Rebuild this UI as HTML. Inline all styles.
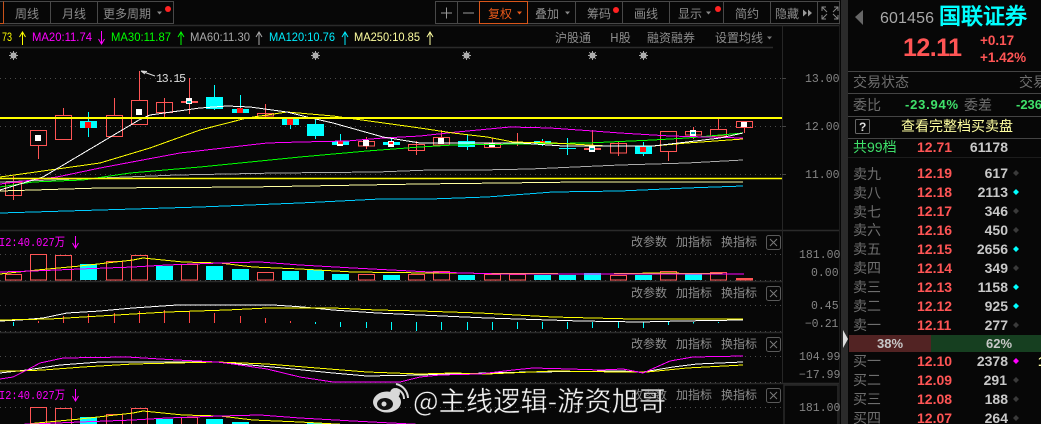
<!DOCTYPE html>
<html><head><meta charset="utf-8">
<style>
html,body{margin:0;padding:0;background:#070707;width:1041px;height:424px;overflow:hidden}
svg{display:block}
text{font-family:"Liberation Sans","WenQuanYi Zen Hei","Noto Sans CJK SC",sans-serif;white-space:pre}
.m{font-family:"Liberation Mono","WenQuanYi Zen Hei",monospace}
.t{font-size:12px;fill:#8c8c8c;font-family:"WenQuanYi Zen Hei","Noto Sans CJK SC",sans-serif}
.a{font-family:"Liberation Mono",monospace;font-size:11.5px;fill:#858585}
.l{font-size:14px;fill:#6e6e6e;font-family:"WenQuanYi Zen Hei","Noto Sans CJK SC",sans-serif}
.p{font-size:14px;font-weight:bold;fill:#f55}
.v{font-size:14px;font-weight:bold;fill:#c8c8c8;text-anchor:end}
.r{fill:none;stroke:#f55;stroke-width:1}
.c{fill:#0ff}
.w{stroke:#f55;stroke-width:1}
.wc{stroke:#0ff;stroke-width:1}
.ln{fill:none;stroke-width:1;shape-rendering:crispEdges}
.b{fill:none;stroke:#484848;stroke-width:1}
.d{stroke:#4a4a4a;stroke-width:1;stroke-dasharray:1 4}
.s{stroke:#2a2a2a;stroke-width:1.5}
</style></head>
<body>
<svg width="1041" height="424" viewBox="0 0 1041 424" xmlns="http://www.w3.org/2000/svg">
<defs>
<g id="vol">
<path class="d" d="M0 254.5H782M0 280.5H782"/>
<g class="r">
<rect x="5.5" y="274.5" width="16" height="5.5"/><rect x="30.5" y="254.5" width="16" height="25.5"/><rect x="55.5" y="255.5" width="16" height="24.5"/><rect x="106.5" y="261.5" width="16" height="18.5"/><rect x="131.5" y="255.5" width="16" height="24.5"/><rect x="181.5" y="264.5" width="16" height="15.5"/><rect x="257.5" y="272.5" width="16" height="7.5"/><rect x="358.5" y="274.5" width="16" height="5.5"/><rect x="408.5" y="274.5" width="16" height="5.5"/><rect x="433.5" y="271.5" width="16" height="8.5"/><rect x="484.5" y="274.5" width="16" height="5.5"/><rect x="509.5" y="274.5" width="16" height="5.5"/><rect x="610.5" y="275.5" width="16" height="4.5"/><rect x="660.5" y="271.5" width="16" height="8.5"/><rect x="710.5" y="272.5" width="16" height="7.5"/>
</g>
<g class="c">
<rect x="80" y="264" width="17" height="16"/><rect x="156" y="266" width="17" height="14"/><rect x="206" y="266" width="17" height="14"/><rect x="232" y="269" width="17" height="11"/><rect x="282" y="271" width="17" height="9"/><rect x="307" y="270" width="17" height="10"/><rect x="332" y="274" width="17" height="6"/><rect x="383" y="275" width="17" height="5"/><rect x="458" y="275" width="17" height="5"/><rect x="534" y="275" width="17" height="5"/><rect x="559" y="275" width="17" height="5"/><rect x="584" y="273" width="17" height="7"/><rect x="635" y="275" width="17" height="5"/><rect x="685" y="274" width="17" height="6"/>
</g>
<rect x="736" y="278" width="17" height="2.5" fill="#f55"/>
<polyline class="ln" stroke="#ff0" points="0,274 37,270 80,266 133,260 143,258 183,262 220,263 253,267 300,269 353,272 430,273 600,274 657,273 744,274"/>
<polyline class="ln" stroke="#f0f" points="0,272 33,271 80,269 133,267 167,265 220,263 260,262 300,265 353,268 430,272 500,274 744,274"/>
</g>
<g id="x"><rect x="0.5" y="0.5" width="14" height="14" rx="2" fill="none" stroke="#5a5a5a"/><path d="M4 4L11 11M11 4L4 11" stroke="#7a7a7a"/></g>
<g id="star"><circle r="3" fill="#bbb"/><path d="M-4.5 0H4.5M0-4.5V4.5M-3.3-3.3L3.3 3.3M3.3-3.3L-3.3 3.3" stroke="#aaa"/></g>
<clipPath id="cl"><rect x="0" y="384" width="782" height="40"/></clipPath>
</defs>
<rect width="1041" height="424" fill="#070707"/>

<!-- frame -->
<path class="s" d="M0 25.5H840M0 47.5H773M0 230.5H840M0 281.5H782M0 332.5H782M0 383.5H840"/>
<path d="M782.5 26V383" stroke="#262626"/>
<path d="M784 424V385H838V424" fill="none" stroke="#2a2a2a" stroke-width="1.5"/>
<rect x="841" y="0" width="7" height="424" fill="#2b2b2b"/>
<rect x="839" y="0" width="1" height="424" fill="#1c1c1c"/>
<path d="M843 330L848 339L843 348Z" fill="#ddd"/>

<!-- left tabs -->
<path class="b" d="M-1 1.5H173.5V23.5H-1M50.5 1.5V23.5M97.5 1.5V23.5"/>
<path d="M3.5 1.5V23.5H0" fill="none" stroke="#c8521a"/>
<text class="t" x="15" y="18">周线</text>
<text class="t" x="62" y="18">月线</text>
<text class="t" x="103" y="18">更多周期</text>
<path d="M157 11.5h5l-2.5 3z" fill="#888"/>
<circle cx="168" cy="9" r="3" fill="#f22"/>

<!-- right toolbar -->
<path class="b" d="M435.5 1.5H839.5V23.5H435.5ZM457.5 1.5V23.5M479.5 1.5V23.5M575.5 1.5V23.5M622.5 1.5V23.5M669.5 1.5V23.5M723.5 1.5V23.5M770.5 1.5V23.5M817.5 1.5V23.5"/>
<path d="M441 13H452M446.5 7.5V18.5M463 13H474" stroke="#999"/>
<rect x="479.5" y="1.5" width="48" height="22" fill="none" stroke="#d9561a"/>
<text x="488" y="18" style="font-size:12px;fill:#e8591a;font-family:'WenQuanYi Zen Hei',sans-serif">复权</text>
<path d="M517 11.5h5l-2.5 3z" fill="#e8591a"/>
<text class="t" x="535" y="18">叠加</text>
<path d="M565 11.5h5l-2.5 3z" fill="#888"/>
<text class="t" x="587" y="18">筹码</text>
<circle cx="616" cy="10" r="3" fill="#f22"/>
<text class="t" x="634" y="18">画线</text>
<text class="t" x="678" y="18">显示</text>
<path d="M706 11.5h5l-2.5 3z" fill="#888"/>
<circle cx="718" cy="9" r="3" fill="#f22"/>
<text class="t" x="735" y="18">简约</text>
<text class="t" x="775" y="18">隐藏</text>
<path d="M803 9.5l4 3.5-4 3.5zM808 9.5l4 3.5-4 3.5z" fill="#999"/>
<path d="M822 11V7H826M834 7H838V11M838 15V19H834M826 19H822V15M822 7L827 12M838 7L833 12M838 19L833 14M822 19L827 14" fill="none" stroke="#888"/>

<!-- MA row -->
<g style="font-size:12px" class="m">
<text x="2" y="41" fill="#ff0" textLength="10" lengthAdjust="spacingAndGlyphs">73</text>
<text x="32" y="41" fill="#f0f" textLength="60" lengthAdjust="spacingAndGlyphs">MA20:11.74</text>
<text x="111" y="41" fill="#0f0" textLength="60" lengthAdjust="spacingAndGlyphs">MA30:11.87</text>
<text x="190" y="41" fill="#aaa" textLength="60" lengthAdjust="spacingAndGlyphs">MA60:11.30</text>
<text x="269" y="41" fill="#0ef" textLength="66" lengthAdjust="spacingAndGlyphs">MA120:10.76</text>
<text x="354" y="41" fill="#ffffa0" textLength="66" lengthAdjust="spacingAndGlyphs">MA250:10.85</text>
</g>
<g fill="none">
<path d="M22.5 45V32M19.5 37L22.5 32L25.5 37" stroke="#ff0"/>
<path d="M101.5 31V44M98.5 39L101.5 44L104.5 39" stroke="#f0f"/>
<path d="M181 45V32M178 37L181 32L184 37" stroke="#0f0"/>
<path d="M259 45V32M256 37L259 32L262 37" stroke="#aaa"/>
<path d="M345 45V32M342 37L345 32L348 37" stroke="#0ef"/>
<path d="M430 45V32M427 37L430 32L433 37" stroke="#ffffa0"/>
</g>
<text class="t" x="555" y="42">沪股通</text>
<text class="t" x="610" y="42">H股</text>
<text class="t" x="647" y="42">融资融券</text>
<text class="t" x="715" y="42">设置均线</text>
<path d="M767 36.5h5l-2.5 3z" fill="#777"/>

<!-- stars -->
<use href="#star" x="13.5" y="55.5"/><use href="#star" x="315.5" y="55.5"/><use href="#star" x="466.5" y="55.5"/><use href="#star" x="592.5" y="55.5"/><use href="#star" x="643.5" y="55.5"/>

<!-- main chart grid -->
<path class="d" d="M0 78.5H782M0 126.5H782M0 174.5H782"/>
<path d="M782 78.5h4M782 126.5h4M782 174.5h4" stroke="#444"/>
<text class="a" x="805" y="82">13.00</text>
<text class="a" x="805" y="130">12.00</text>
<text class="a" x="805" y="178">11.00</text>

<!-- candle wicks -->
<g class="w">
<path d="M13.5 176V200M38.5 146V159M63.5 108V115M114.5 98V115M139.5 71V100M164.5 98V117M189.5 78V114M265.5 104V118M366.5 137V149M416.5 141V155M441.5 130V137M492.5 138V147M517.5 133V146M592.5 130V150M618.5 141V156M668.5 152V161M693.5 127V139M718.5 118V129M744.5 127V133"/>
</g>
<g class="wc">
<path d="M88.5 112V137M214.5 85V110M240.5 95V113M290.5 125V129M315.5 118V139M340.5 134V145M391.5 139V147M467.5 135V150M542.5 139V146M567.5 138V155M643.5 142V156"/>
</g>
<!-- hollow -->
<g class="r">
<rect x="5.5" y="182.5" width="16" height="13"/>
<rect x="30.5" y="130.5" width="16" height="15"/>
<rect x="55.5" y="115.5" width="16" height="24"/>
<rect x="106.5" y="115.5" width="16" height="21"/>
<rect x="131.5" y="100.5" width="16" height="24"/>
<rect x="156.5" y="102.5" width="16" height="10"/>
<rect x="257.5" y="113.5" width="16" height="2.5"/>
<rect x="358.5" y="141.5" width="16" height="4.5"/>
<rect x="408.5" y="144.5" width="16" height="6"/>
<rect x="433.5" y="137.5" width="16" height="7.5"/>
<rect x="484.5" y="143.5" width="16" height="4"/>
<rect x="610.5" y="143.5" width="16" height="9.5"/>
<rect x="660.5" y="131.5" width="16" height="20"/>
<rect x="685.5" y="131.5" width="16" height="3.5"/>
<rect x="710.5" y="129.5" width="16" height="6.5"/>
<rect x="736.5" y="121.5" width="16" height="6"/>
</g>
<!-- filled -->
<g class="c">
<rect x="80" y="121" width="17" height="7"/><rect x="206" y="97" width="17" height="12"/><rect x="232" y="109" width="17" height="4"/><rect x="282" y="119" width="17" height="6"/><rect x="307" y="124" width="17" height="12"/><rect x="332" y="141" width="17" height="4"/><rect x="383" y="142" width="17" height="3"/><rect x="458" y="141" width="17" height="6"/><rect x="534" y="141" width="17" height="3"/><rect x="559" y="148" width="17" height="1"/><rect x="635" y="146" width="17" height="8"/>
</g>
<rect x="181" y="101" width="17" height="2" fill="#f55"/>
<rect x="584" y="148" width="17" height="2" fill="#f55"/>
<!-- centers -->
<g fill="#fff">
<rect x="35" y="135" width="6" height="6"/><rect x="136" y="109" width="6" height="6"/><rect x="186" y="98" width="6" height="6"/><rect x="438" y="138" width="6" height="6"/><rect x="489" y="143" width="6" height="4"/><rect x="589" y="146" width="6" height="6"/><rect x="690" y="130" width="6" height="6"/><rect x="741" y="122" width="6" height="5"/><rect x="337" y="141" width="6" height="5"/><rect x="388" y="141" width="6" height="6"/><rect x="363" y="140" width="6" height="6"/>
</g>
<g fill="#0aa"><rect x="187" y="101" width="4" height="2"/><rect x="590" y="148" width="4" height="2"/><rect x="691" y="132" width="4" height="2"/></g>
<g fill="#f11"><rect x="85" y="122" width="6" height="6"/><rect x="237" y="108" width="6" height="5"/><rect x="287" y="119" width="6" height="6"/><rect x="338" y="141" width="5" height="3"/><rect x="389" y="142" width="4" height="2"/><rect x="540" y="141" width="5" height="3"/><rect x="640" y="147" width="6" height="5"/></g>

<!-- MA lines -->
<polyline class="ln" stroke="#ffffa0" points="0,191 100,188 250,187 420,184 503,183 580,182 743,182"/>
<polyline class="ln" stroke="#0cf" points="0,213 100,210 200,207 300,203 380,199 430,199 487,197 553,192 620,191 687,188 743,186"/>
<polyline class="ln" stroke="#aaa" points="0,182 50,180 177,175 277,173 377,172 430,170 480,170 530,169 620,165 687,163 743,160"/>
<polyline class="ln" stroke="#0f0" points="0,187 33,182 83,180 130,173 200,167 300,157 367,151 420,147 453,145 587,143 653,140 687,138 743,133"/>
<polyline class="ln" stroke="#f0f" points="0,184 57,177 100,168 180,153 267,143 300,142 347,141 383,138 420,136 457,132 510,127 550,128 593,131 620,133 670,136 743,138"/>
<polyline class="ln" stroke="#ff0" points="0,177 50,170 100,163 150,148 200,130 247,118 287,112 333,116 420,128 453,133 487,137 513,142 553,143 607,146 653,146 687,143 743,139"/>
<polyline class="ln" stroke="#fff" points="0,190 43,177 139,120 150,115 200,108 227,106 250,107 287,112 307,117 333,123 383,137 420,143 520,143 563,146 653,146 687,142 720,138 743,133"/>
<path d="M0 118H782" stroke="#ff0" stroke-width="2"/>
<path d="M0 178.5H782" stroke="#ff0" stroke-width="1.5"/>
<path d="M141 71L155 76M141 71L147 71.5M141 71L145 74" stroke="#ddd" fill="none"/>
<text x="156" y="82" class="m" style="font-size:11.5px" fill="#ddd" textLength="30">13.15</text>

<!-- panel labels -->
<text x="-1" y="246" class="m" style="font-size:12px" fill="#f0f" textLength="66" lengthAdjust="spacingAndGlyphs">I2:40.027万</text>
<path d="M75.5 236V248M72.5 243L75.5 248L78.5 243" stroke="#f0f" fill="none"/>
<text x="-1" y="399" class="m" style="font-size:12px" fill="#f0f" textLength="66" lengthAdjust="spacingAndGlyphs">I2:40.027万</text>
<path d="M75.5 389V401M72.5 396L75.5 401L78.5 396" stroke="#f0f" fill="none"/>
<g class="t">
<text x="631" y="246">改参数</text><text x="676" y="246">加指标</text><text x="721" y="246">换指标</text>
<text x="631" y="297">改参数</text><text x="676" y="297">加指标</text><text x="721" y="297">换指标</text>
<text x="631" y="348">改参数</text><text x="676" y="348">加指标</text><text x="721" y="348">换指标</text>
<text x="631" y="399">改参数</text><text x="676" y="399">加指标</text><text x="721" y="399">换指标</text>
</g>
<use href="#x" x="766" y="235"/><use href="#x" x="766" y="286"/><use href="#x" x="766" y="337"/><use href="#x" x="766" y="388"/>

<!-- volume panel -->
<use href="#vol"/>
<text class="a" x="799" y="258">181.00</text><text class="a" x="811" y="276">0.00</text>

<!-- MACD -->
<path class="d" d="M0 305.5H782M0 331.5H782"/>
<path d="M38.5 321V323M63.5 316V323M88.5 314V323M114.500 313V323M139.500 311V323M164.500 310V323M189.500 311V323M214.500 313V323M240.500 316V323M265.500 318V323M290.500 321V323" stroke="#f44"/>
<path d="M13.5 322V326M315.500 322V324M340.500 322V327M366.500 322V328M391.500 322V330M416.500 322V331M441.500 322V330M467.500 322V330M492.500 322V330M517.500 322V329M542.500 322V329M567.500 322V329M592.500 322V328M618.500 322V328M643.500 322V328M668.500 322V325M693.500 322V323.500M718.500 322V323" stroke="#0ff"/>
<polyline class="ln" stroke="#fff" points="0,321 20,320 43,318 67,313 100,311 133,308 177,305 273,305 303,307 333,310 377,313 420,315 487,318 580,321 640,322 680,321 743,320"/>
<polyline class="ln" stroke="#ff0" points="0,320 50,319 100,316 167,312 227,310 267,308 333,308 377,310 420,311 480,313 553,317 633,319 743,319"/>
<text class="a" x="811" y="309">0.45</text><text class="a" x="805" y="327" style="letter-spacing:-.3px">−0.21</text>

<!-- KDJ -->
<path class="d" d="M0 356.5H782M0 382.5H782"/>
<polyline class="ln" stroke="#fff" points="0,373 27,370 60,365 100,362 150,362 217,362 250,365 283,368 333,373 367,376 420,375 487,373 530,372 620,371 643,372 673,367 697,364 743,362"/>
<polyline class="ln" stroke="#ff0" points="0,371 20,371 43,370 83,367 133,364 217,362 267,364 317,368 367,372 420,374 453,373 487,374 553,371 620,372 647,372 687,368 743,365"/>
<polyline class="ln" stroke="#f0f" points="0,379 13,377 27,370 40,363 63,358 127,357 177,360 217,362 233,364 267,369 300,377 333,382 400,382 420,377 440,375 480,374 513,370 533,368 570,369 600,370 623,369 643,373 670,361 693,357 743,356"/>
<text class="a" x="799" y="360">104.99</text><text class="a" x="799" y="378">−17.99</text>

<!-- 4th panel -->
<g clip-path="url(#cl)"><use href="#vol" y="153"/></g>
<text class="a" x="799" y="411">181.00</text>

<!-- Right panel -->
<path d="M855 17L863 10V25Z" fill="#666"/>
<text x="880" y="23" style="font-size:16px" fill="#a8a8a8" textLength="54">601456</text>
<text x="939" y="24" style="font-size:22px;font-weight:bold;font-family:'WenQuanYi Zen Hei',sans-serif" fill="#0ff">国联证券</text>
<text x="903" y="56" style="font-size:25px;font-weight:bold" fill="#f55" textLength="59">12.11</text>
<text x="980" y="45" style="font-size:13.5px;font-weight:bold" fill="#f55">+0.17</text>
<text x="980" y="62" style="font-size:13.5px;font-weight:bold" fill="#f55">+1.42%</text>
<path d="M848 71.5H1041M848 93.5H1041M848 116.5H1041M848 138.5H1041" stroke="#444"/>
<path d="M848 157.5H1041" stroke="#1c1c1c"/>
<text class="l" x="853" y="87">交易状态</text><text class="l" x="1019" y="87">交易</text>
<text class="l" x="853" y="110">委比</text>
<text x="905" y="109" style="font-size:13px;font-weight:bold" fill="#3fe06a" textLength="53">-23.94%</text>
<text class="l" x="964" y="110">委差</text>
<text x="1016" y="109" style="font-size:13px;font-weight:bold" fill="#3fe06a">-236</text>
<rect x="855.5" y="119.5" width="14" height="14" rx="1" fill="none" stroke="#666"/>
<text x="859" y="131" style="font-size:12px;font-weight:bold" fill="#ddd">?</text>
<text x="901" y="131" style="font-size:14px;font-family:'WenQuanYi Zen Hei',sans-serif" fill="#ffffa0">查看完整档买卖盘</text>
<text x="853" y="152" style="font-size:14px;font-family:'WenQuanYi Zen Hei',sans-serif" fill="#3fe06a">共99档</text>
<text class="p" x="917" y="152">12.71</text>
<text class="v" x="1008" y="152">61178</text>

<g class="l">
<text x="853" y="179">卖九</text><text x="853" y="198">卖八</text><text x="853" y="217">卖七</text><text x="853" y="235">卖六</text><text x="853" y="254">卖五</text><text x="853" y="273">卖四</text><text x="853" y="292">卖三</text><text x="853" y="311">卖二</text><text x="853" y="330">卖一</text><text x="853" y="366">买一</text><text x="853" y="385">买二</text><text x="853" y="404">买三</text><text x="853" y="423">买四</text>
</g>
<g class="p">
<text x="917" y="178">12.19</text><text x="917" y="197">12.18</text><text x="917" y="216">12.17</text><text x="917" y="235">12.16</text><text x="917" y="254">12.15</text><text x="917" y="273">12.14</text><text x="917" y="292">12.13</text><text x="917" y="311">12.12</text><text x="917" y="330">12.11</text><text x="917" y="366">12.10</text><text x="917" y="385">12.09</text><text x="917" y="404">12.08</text><text x="917" y="423">12.07</text>
</g>
<g class="v">
<text x="1008" y="178">617</text><text x="1008" y="197">2113</text><text x="1008" y="216">346</text><text x="1008" y="235">450</text><text x="1008" y="254">2656</text><text x="1008" y="273">349</text><text x="1008" y="292">1158</text><text x="1008" y="311">925</text><text x="1008" y="330">277</text><text x="1008" y="366">2378</text><text x="1007" y="385">291</text><text x="1008" y="404">188</text><text x="1008" y="423">264</text>
</g>
<g fill="#3a3a3a">
<path d="M1016 170l3 3-3 3-3-3zM1016 208l3 3-3 3-3-3zM1016 227l3 3-3 3-3-3zM1016 265l3 3-3 3-3-3zM1016 322l3 3-3 3-3-3zM1016 377l3 3-3 3-3-3zM1016 396l3 3-3 3-3-3zM1016 415l3 3-3 3-3-3z"/>
</g>
<path d="M1016 189l3 3-3 3-3-3zM1016 246l3 3-3 3-3-3zM1016 284l3 3-3 3-3-3zM1016 303l3 3-3 3-3-3z" fill="#0ff"/>
<path d="M1016 358l3 3-3 3-3-3z" fill="#f0f"/>
<rect x="849" y="335" width="82" height="17" fill="#522323"/>
<rect x="931" y="335" width="110" height="17" fill="#163f20"/>
<text x="877" y="348" style="font-size:13px;font-weight:bold" fill="#c8c8c8">38%</text>
<text x="986" y="348" style="font-size:13px;font-weight:bold" fill="#c8c8c8">62%</text>
<text x="1038" y="366" style="font-size:13px;font-weight:bold" fill="#ffffa0">1</text>

<!-- Watermark -->
<g fill="#d8d8d8">
<ellipse cx="387" cy="402" rx="14" ry="10.5"/>
<circle cx="395" cy="393" r="5"/>
</g>
<ellipse cx="385" cy="404" rx="8" ry="6" fill="#111"/>
<circle cx="384" cy="404" r="2.5" fill="#d8d8d8"/>
<path d="M396 389a10 10 0 0 1 8 10M396 384a15 15 0 0 1 12 14" fill="none" stroke="#d8d8d8" stroke-width="2"/>
<text x="413" y="411" style="font-size:27px;font-family:'Noto Sans CJK SC','WenQuanYi Zen Hei',sans-serif;stroke:#222;stroke-width:.4" fill="#f2f2f2" textLength="253">@主线逻辑-游资旭哥</text>
</svg>
</body></html>
